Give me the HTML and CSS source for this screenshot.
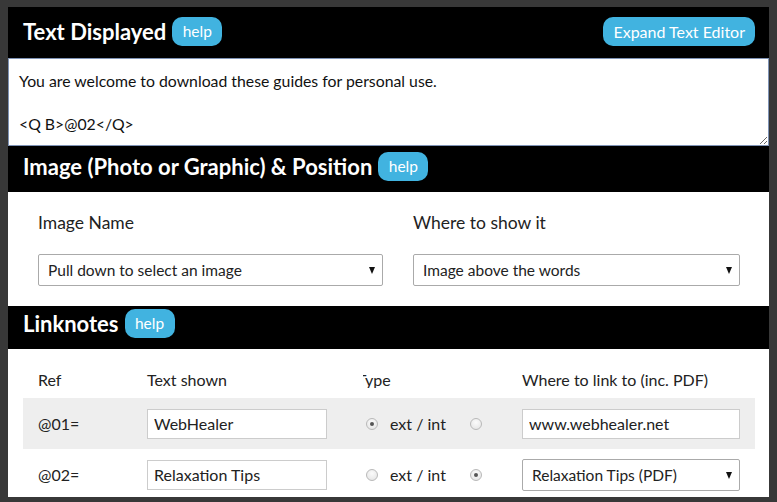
FILE: index.html
```html
<!DOCTYPE html>
<html>
<head>
<meta charset="utf-8">
<link rel="stylesheet" href="styles.css">
</head>
<body>
<div class="panel">
  <div class="bar bar1">
    <h2 class="title">Text Displayed</h2>
    <span class="help">help</span>
    <span class="expand">Expand Text Editor</span>
  </div>
  <textarea class="editor">You are welcome to download these guides for personal use.

&lt;Q B&gt;@02&lt;/Q&gt;</textarea>
  <div class="bar bar2">
    <h2 class="title">Image (Photo or Graphic) &amp; Position</h2>
    <span class="help">help</span>
  </div>
  <div class="image-sec">
    <div class="field">
      <div class="label">Image Name</div>
      <div class="selwrap"><select class="sel"><option>Pull down to select an image</option></select></div>
    </div>
    <div class="field">
      <div class="label">Where to show it</div>
      <div class="selwrap"><select class="sel"><option>Image above the words</option></select></div>
    </div>
  </div>
  <div class="bar bar3">
    <h2 class="title">Linknotes</h2>
    <span class="help">help</span>
  </div>
  <div class="links">
    <div class="row head">
      <div class="c-ref">Ref</div>
      <div class="c-text">Text shown</div>
      <div class="c-type"><span>Type</span></div>
      <div class="c-url">Where to link to (inc. PDF)</div>
    </div>
    <div class="row alt">
      <div class="c-ref">@01=</div>
      <input class="c-text inp" value="WebHealer">
      <span class="radio on"></span>
      <span class="c-ei">ext / int</span>
      <span class="radio r2"></span>
      <input class="c-url inp" value="www.webhealer.net">
    </div>
    <div class="row">
      <div class="c-ref">@02=</div>
      <input class="c-text inp" value="Relaxation Tips">
      <span class="radio"></span>
      <span class="c-ei">ext / int</span>
      <span class="radio r2 on"></span>
      <div class="c-url selwrap"><select class="sel"><option>Relaxation Tips (PDF)</option></select></div>
    </div>
  </div>
</div>
</body>
</html>
```
FILE: styles.css
```css
html, body { height: 100%; }
body {
  margin: 0;
  padding: 7px 8px 0 8px;
  box-sizing: border-box;
  background: #383838;
  font-family: Lato, "Open Sans", sans-serif;
  color: #222;
  overflow: hidden;
}
.panel {
  width: 761px;
  background: #fff;
  display: flex;
  flex-direction: column;
  height: 490px;
  overflow: hidden;
}
.panel > * { flex-shrink: 0; }
.bar {
  background: #000;
  display: flex;
  align-items: center;
  padding: 0 14px 0 15px;
  box-sizing: border-box;
}
.bar1 { height: 51px; padding-top: 10px; padding-bottom: 12px; align-items: center; }
.bar2 { height: 46px; padding-top: 6px; align-items: flex-start; }
.bar3 { height: 43px; padding-top: 3px; align-items: flex-start; }
.title {
  margin: 0;
  color: #fff;
  font-weight: 700;
  font-size: 22px;
  line-height: 29px;
}
.help {
  margin-left: 6px;
  background: #41b3e0;
  color: #fff;
  font-size: 15.5px;
  line-height: 29px;
  height: 29px;
  width: 50px;
  text-align: center;
  border-radius: 10px;
}
.expand {
  margin-left: auto;
  background: #41b3e0;
  color: #fff;
  font-size: 16px;
  line-height: 29px;
  height: 29px;
  padding: 0 10px;
  border-radius: 10px;
}
.editor {
  display: block;
  box-sizing: border-box;
  width: 761px;
  height: 88px;
  margin: 0;
  border: 1px solid #7f93b5;
  padding: 11px 10px 0 10px;
  font-family: Lato, sans-serif;
  font-size: 15.8px;
  line-height: 21.5px;
  color: #111;
  resize: both;
  outline: none;
}
.image-sec {
  height: 114px;
  box-sizing: border-box;
  padding: 19px 29px 0 30px;
  display: grid;
  grid-template-columns: 345px 327px;
  column-gap: 30px;
  align-items: start;
}
.label {
  font-size: 17.5px;
  line-height: 24px;
  color: #222;
  margin-bottom: 19px;
}
.selwrap { position: relative; }
.selwrap::after {
  content: "";
  position: absolute;
  right: 8px;
  top: 50%;
  margin-top: -3px;
  border-left: 3.5px solid transparent;
  border-right: 3.5px solid transparent;
  border-top: 7px solid #111;
}
.sel {
  -webkit-appearance: none;
  appearance: none;
  display: block;
  width: 100%;
  height: 32px;
  box-sizing: border-box;
  border: 1px solid #aaa;
  border-radius: 2px;
  background: #fff;
  font-family: Lato, sans-serif;
  font-size: 15.5px;
  color: #222;
  padding: 0 9px;
  outline: none;
}
.links {
  height: 148px;
  box-sizing: border-box;
  overflow: hidden;
  padding: 23px 14px 0 15px;
}
.row {
  display: grid;
  grid-template-columns: 109px 180px 39px 12px 12px 80px 12px 40px 218px;
  grid-template-areas: "ref text . r1 . ei r2 . url";
  align-items: center;
  padding-left: 15px;
  height: 51px;
  font-size: 16px;
  color: #222;
}
.row.head { height: 26px; align-items: start; line-height: 16px; }
.row.alt { background: #eee; }
.c-ref { grid-area: ref; }
.c-text { grid-area: text; }
.c-url { grid-area: url; }
.c-ei { grid-area: ei; font-size: 16px; }
.c-type {
  grid-column: 3 / 8;
  overflow: hidden;
  margin-left: 36px;
  white-space: nowrap;
}
.c-type span { margin-left: -6px; }
.row > .radio { grid-area: r1; }
.row > .radio.r2 { grid-area: r2; }
.inp {
  height: 30px;
  box-sizing: border-box;
  border: 1px solid #ccc;
  font-family: Lato, sans-serif;
  font-size: 16px;
  color: #222;
  padding: 0 6px;
  width: 100%;
  outline: none;
  background: #fff;
}
.radio {
  width: 12px;
  height: 12px;
  box-sizing: border-box;
  border-radius: 50%;
  border: 1px solid #b9b9b9;
  background: radial-gradient(circle at 50% 35%, #fbfbfb 0%, #e2e2e2 100%);
  position: relative;
}
.radio.on::after {
  content: "";
  position: absolute;
  left: 3px;
  top: 3px;
  width: 4px;
  height: 4px;
  border-radius: 50%;
  background: #555;
}
```
